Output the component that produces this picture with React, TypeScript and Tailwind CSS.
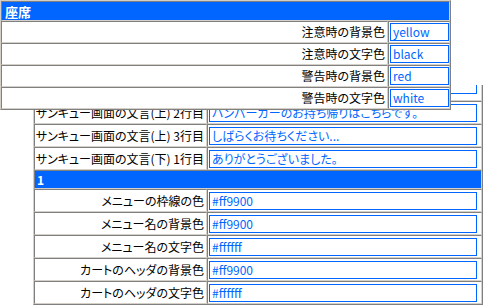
import React from "react";

const cell =
  "border border-t-[#808080] border-l-[#808080] border-b-[#d4d0c8] border-r-[#d4d0c8]";
const frame =
  "border border-t-[#d4d0c8] border-l-[#d4d0c8] border-b-[#808080] border-r-[#808080]";

function BgRow({
  label,
  value,
  top = false,
}: {
  label: string;
  value: string;
  top?: boolean;
}) {
  return (
    <div className="flex h-[23px]">
      <div
        className={`w-[173px] ${cell} flex items-center justify-end pr-[2px] whitespace-nowrap overflow-hidden`}
      >
        {label}
      </div>
      <div
        className={`w-[275px] ${cell} flex ${top ? "items-start" : "items-center"} pl-[1px]`}
      >
        <div
          className={`w-[268px] ${top ? "h-[15px]" : "h-[18px]"} border border-[#0066ff] text-[#0066ff] pl-[2px] flex items-center whitespace-nowrap overflow-hidden`}
        >
          {value}
        </div>
      </div>
    </div>
  );
}

function OvRow({ label, value }: { label: string; value: string }) {
  return (
    <div className="flex h-[22px]">
      <div
        className={`w-[387px] ${cell} flex items-center justify-end pr-[2px] whitespace-nowrap`}
      >
        {label}
      </div>
      <div className={`w-[62px] ${cell} flex items-center pl-[1px]`}>
        <div className="w-[59px] h-[18px] border border-[#0066ff] text-[#0066ff] pl-[2px] flex items-center whitespace-nowrap overflow-hidden">
          {value}
        </div>
      </div>
    </div>
  );
}

export default function App() {
  return (
    <div className="relative w-[485px] h-[306px] bg-white overflow-hidden text-[12px] leading-none text-black font-['Noto_Sans_CJK_JP',sans-serif] [font-feature-settings:'palt']">
      {/* background scrolled table */}
      <div className="ml-[33px] mt-[85px] h-[221px] w-[450px] overflow-hidden">
        <div className={`-mt-[8px] w-[450px] ${frame}`}>
          <BgRow
            top
            label="サンキュー画面の文言(上) 1行目"
            value="いらっしゃいませ。"
          />
          <BgRow
            label="サンキュー画面の文言(上) 2行目"
            value="ハンバーガーのお持ち帰りはこちらです。"
          />
          <BgRow
            label="サンキュー画面の文言(上) 3行目"
            value="しばらくお待ちください..."
          />
          <BgRow
            label="サンキュー画面の文言(下) 1行目"
            value="ありがとうございました。"
          />
          <div className={`h-[19px] ${cell} bg-[#0066ff] text-white font-bold flex items-center pl-[2px]`}>
            1
          </div>
          <BgRow label="メニューの枠線の色" value="#ff9900" />
          <BgRow label="メニュー名の背景色" value="#ff9900" />
          <BgRow label="メニュー名の文字色" value="#ffffff" />
          <BgRow label="カートのヘッダの背景色" value="#ff9900" />
          <BgRow label="カートのヘッダの文字色" value="#ffffff" />
        </div>
      </div>

      {/* overlay popup */}
      <div className={`absolute left-0 top-0 w-[451px] bg-white ${frame}`}>
        <div
          className={`h-[20px] ${cell} bg-[#0066ff] text-white font-bold text-[13px] flex items-center pl-[3px]`}
        >
          座席
        </div>
        <OvRow label="注意時の背景色" value="yellow" />
        <OvRow label="注意時の文字色" value="black" />
        <OvRow label="警告時の背景色" value="red" />
        <OvRow label="警告時の文字色" value="white" />
      </div>
    </div>
  );
}
